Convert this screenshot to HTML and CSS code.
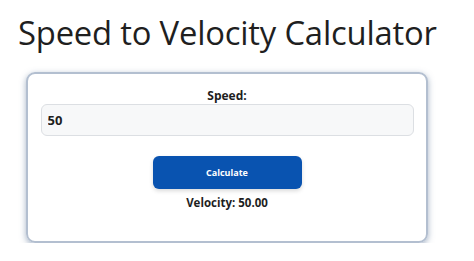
FILE: index.html
```html
<!DOCTYPE html>
<html lang="en">

<head>
    <meta charset="UTF-8">
    <meta name="viewport" content="width=device-width, initial-scale=1.0">
    <title>Speed to Velocity Calculator</title>
    <link rel="stylesheet" href="styles.css">
</head>

<body>
    <h1>Speed to Velocity Calculator</h1>

    <!-- Карточка калькулятора -->
    <div class="calculator">
        <label for="speed" class="field-label">Speed:</label>
        <input type="text" id="speed" class="speed-input" value="50">
        <button id="calcButton" class="calc-button">Calculate</button>
        <p class="result" id="result">Velocity: 50.00</p>
    </div>

    <script>
        const speedInput = document.getElementById('speed');
        const calcButton = document.getElementById('calcButton');
        const result = document.getElementById('result');

        calcButton.addEventListener('click', function () {
            const speed = parseFloat(speedInput.value) || 0;
            result.textContent = `Velocity: ${speed.toFixed(2)}`;
        });
    </script>
</body>

</html>
```

FILE: styles.css
```css
body {
    margin: 0;
    background-color: #ffffff;
    font-family: "Open Sans", "Noto Sans", sans-serif;
    color: #1e1e1e;
}

h1 {
    margin: 11px 0 0 18px;
    font-size: 32.8px;
    font-weight: 400;
    line-height: 44px;
    letter-spacing: -0.2px;
    color: #1f1f1f;
}

/* Карточка калькулятора */
.calculator {
    width: 398px;
    height: 153px;
    margin: 17px 0 0 26px;
    border: 2px solid #b3bfd0;
    border-radius: 9px;
    box-shadow: 0 2px 6px rgba(90, 115, 150, 0.55);
    display: flex;
    flex-direction: column;
    align-items: center;
    padding-top: 14px;
}

.field-label {
    font-size: 12px;
    font-weight: 700;
    line-height: 16px;
}

.speed-input {
    width: 373px;
    height: 32px;
    box-sizing: border-box;
    margin-top: 0;
    padding: 0 6px;
    border: 1px solid #dcdfe3;
    border-radius: 6px;
    background-color: #f7f8f9;
    font-family: inherit;
    font-size: 13px;
    font-weight: 700;
    color: #1e1e1e;
}

.calc-button {
    width: 149px;
    height: 33px;
    margin-top: 20px;
    border: none;
    border-radius: 6px;
    background-color: #0953b0;
    color: #ffffff;
    font-family: inherit;
    font-size: 9px;
    font-weight: 700;
    box-shadow: 0 2px 4px rgba(0, 0, 0, 0.15);
    cursor: pointer;
}

.result {
    margin: 5px 0 0;
    font-size: 11.5px;
    font-weight: 700;
    line-height: 18px;
}
```
